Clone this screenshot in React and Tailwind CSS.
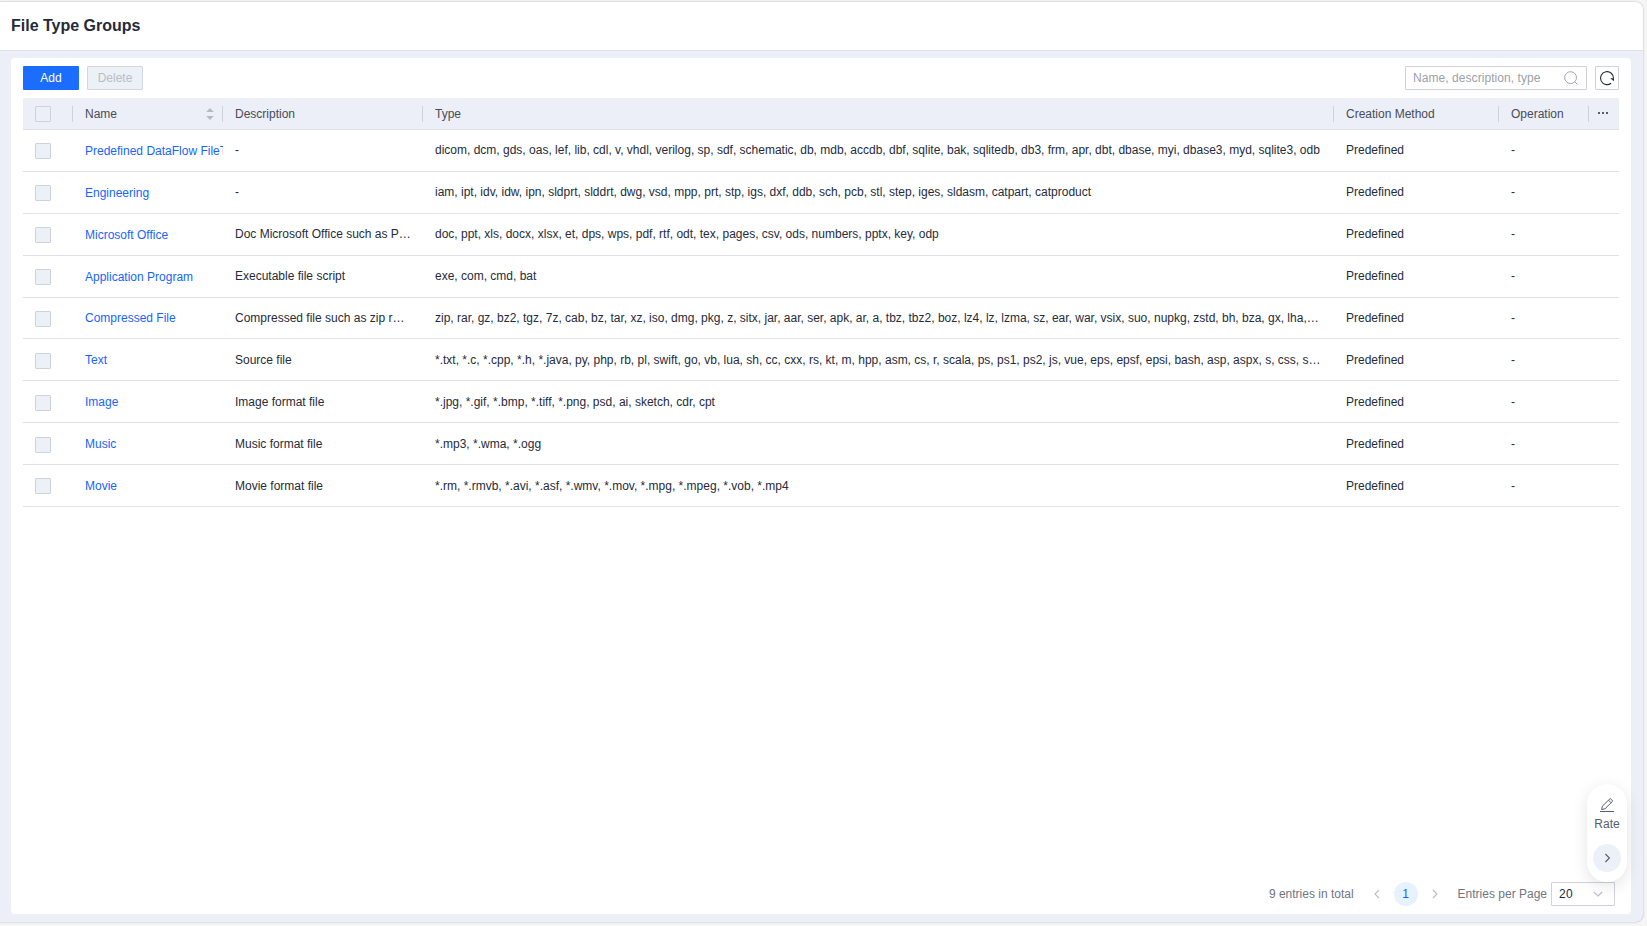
import React from 'react';

const COLS = 'grid grid-cols-[50px_150px_200px_911px_165px_90px_30px]';

const GROUPS = [
  { name: 'Predefined DataFlow FileTypes', desc: '-', types: 'dicom, dcm, gds, oas, lef, lib, cdl, v, vhdl, verilog, sp, sdf, schematic, db, mdb, accdb, dbf, sqlite, bak, sqlitedb, db3, frm, apr, dbt, dbase, myi, dbase3, myd, sqlite3, odb', row: 'h-[42px] leading-[40px]', box: 'mt-[13px]', link: 'pt-px' },
  { name: 'Engineering', desc: '-', types: 'iam, ipt, idv, idw, ipn, sldprt, slddrt, dwg, vsd, mpp, prt, stp, igs, dxf, ddb, sch, pcb, stl, step, iges, sldasm, catpart, catproduct', row: 'h-[42px] leading-[40px]', box: 'mt-[13px]', link: 'pt-px' },
  { name: 'Microsoft Office', desc: 'Doc Microsoft Office such as PPT', types: 'doc, ppt, xls, docx, xlsx, et, dps, wps, pdf, rtf, odt, tex, pages, csv, ods, numbers, pptx, key, odp', row: 'h-[42px] leading-[40px]', box: 'mt-[13px]', link: 'pt-px' },
  { name: 'Application Program', desc: 'Executable file script', types: 'exe, com, cmd, bat', row: 'h-[42px] leading-[40px]', box: 'mt-[13px]', link: 'pt-px' },
  { name: 'Compressed File', desc: 'Compressed file such as zip rar 7z', types: 'zip, rar, gz, bz2, tgz, 7z, cab, bz, tar, xz, iso, dmg, pkg, z, sitx, jar, aar, ser, apk, ar, a, tbz, tbz2, boz, lz4, lz, lzma, sz, ear, war, vsix, suo, nupkg, zstd, bh, bza, gx, lha, lzh', row: 'h-[41px] leading-[40px]', box: 'mt-[13px]', link: '' },
  { name: 'Text', desc: 'Source file', types: '*.txt, *.c, *.cpp, *.h, *.java, py, php, rb, pl, swift, go, vb, lua, sh, cc, cxx, rs, kt, m, hpp, asm, cs, r, scala, ps, ps1, ps2, js, vue, eps, epsf, epsi, bash, asp, aspx, s, css, sass', row: 'h-[42px] leading-[42px]', box: 'mt-[14px]', link: '' },
  { name: 'Image', desc: 'Image format file', types: '*.jpg, *.gif, *.bmp, *.tiff, *.png, psd, ai, sketch, cdr, cpt', row: 'h-[42px] leading-[42px]', box: 'mt-[14px]', link: '' },
  { name: 'Music', desc: 'Music format file', types: '*.mp3, *.wma, *.ogg', row: 'h-[42px] leading-[42px]', box: 'mt-[14px]', link: '' },
  { name: 'Movie', desc: 'Movie format file', types: '*.rm, *.rmvb, *.avi, *.asf, *.wmv, *.mov, *.mpg, *.mpeg, *.vob, *.mp4', row: 'h-[42px] leading-[42px]', box: 'mt-[13px]', link: '' },
];

function HeadCell({ children, className = '' }) {
  return (
    <div className={`flex h-4 items-center border-r border-[#cfd2da] ${className}`}>
      {children}
    </div>
  );
}

function Chevron({ d, className }) {
  return (
    <svg viewBox="0 0 10 10" className={className} fill="none" stroke="currentColor" strokeWidth="1.1">
      <path d={d} />
    </svg>
  );
}

function Toolbar() {
  return (
    <div className="flex h-6 items-center">
      <button className="h-6 w-14 rounded-[1px] bg-[#1a6dff] text-white">Add</button>
      <button className="ml-2 h-6 w-14 rounded-[1px] border border-[#d3d6dd] bg-[#ecf0f7] text-[#babdc6]" disabled>Delete</button>
      <div className="ml-auto flex h-6 w-[182px] items-center justify-between rounded-[1px] border border-[#cfd2dc] pr-[7px] pl-[7px]">
        <span className="tracking-[0.06px] text-[#9b9fa8]">Name, description, type</span>
        <svg viewBox="0 0 16 16" className="size-4" fill="none" stroke="#a0a4ae" strokeWidth="1">
          <circle cx="7.6" cy="7.6" r="5.9" />
          <path d="M12 12l2.3 2.3" />
        </svg>
      </div>
      <button className="ml-2 flex size-6 items-center justify-center rounded-[1px] border border-[#cfd2dc]">
        <svg viewBox="0 0 16 16" className="size-4" fill="none" stroke="#252b3a" strokeWidth="1.1">
          <path d="M12.1 13.2A6.5 6.5 0 1 1 14.5 8.5" />
          <path d="M11.2 8.3h3.8v3z" fill="#252b3a" stroke="none" />
        </svg>
      </button>
    </div>
  );
}

function TableHead() {
  return (
    <div className={`${COLS} h-8 items-center rounded-t-[2px] border-b border-[#dfe1e8] bg-[#eceff7] text-[#464c59]`}>
      <HeadCell className="pl-3">
        <span className="size-4 rounded-[1px] border border-[#cfd2da]" />
      </HeadCell>
      <HeadCell className="justify-between pr-2 pl-3">
        Name
        <svg viewBox="0 0 8 12" className="h-3 w-2" fill="#b6b9c2">
          <path d="M4 0l3.8 4H.2zM4 12l3.8-4H.2z" />
        </svg>
      </HeadCell>
      <HeadCell className="pl-3">Description</HeadCell>
      <HeadCell className="pl-3">Type</HeadCell>
      <HeadCell className="pl-3">Creation Method</HeadCell>
      <HeadCell className="pl-3">Operation</HeadCell>
      <div className="flex gap-[2px] pb-[2px] pl-[9px]">
        <span className="size-[2px] bg-[#575d6c]" />
        <span className="size-[2px] bg-[#575d6c]" />
        <span className="size-[2px] bg-[#575d6c]" />
      </div>
    </div>
  );
}

function GroupRow({ group }) {
  return (
    <div className={`${COLS} ${group.row} border-b border-[#dfe1e8]`}>
      <div className="pl-3">
        <div className={`${group.box} size-4 rounded-[1px] border border-[#cfd2da] bg-[#ecf0f7]`} />
      </div>
      <div className={`overflow-hidden pl-3 whitespace-nowrap text-[#1764ff] ${group.link}`}>{group.name}</div>
      <div className="truncate pr-3 pl-3">{group.desc}</div>
      <div className="truncate pr-3 pl-3">{group.types}</div>
      <div className="pl-3">Predefined</div>
      <div className="pl-3">-</div>
    </div>
  );
}

function Pagination() {
  return (
    <div className="mt-auto flex h-6 items-center pr-1 text-[#71757f]">
      <span className="ml-auto">9 entries in total</span>
      <Chevron d="M7 1L3 5l4 4" className="ml-[18px] size-[10px] text-[#babdc6]" />
      <span className="ml-3 flex size-6 items-center justify-center rounded-full bg-[#e6f3ff] text-[#1a5cff]">1</span>
      <Chevron d="M3 1l4 4-4 4" className="ml-3 size-[10px] text-[#babdc6]" />
      <span className="ml-[18px]">Entries per Page</span>
      <div className="ml-1 flex h-6 w-16 items-center justify-between rounded-[1px] border border-[#cfd2dc] pr-[11px] pl-[7px] text-[#252b3a]">
        <span className="tracking-[0.3px]">20</span>
        <Chevron d="M.8 3L5 7l4.2-4" className="size-[10px] text-[#babdc6]" />
      </div>
    </div>
  );
}

// Floating feedback pill over the lower right corner
function RateWidget() {
  return (
    <div className="absolute top-[784px] left-[1587px] flex h-[98px] w-10 flex-col items-center rounded-[20px] bg-white pt-[13px] text-[#575d6c] shadow-[0_4px_16px_rgba(0,0,0,0.11)]">
      <svg viewBox="0 0 16 16" className="size-4" fill="none" stroke="currentColor" strokeWidth="1">
        <path d="M2.6 12.6l.8-3.5 7.8-7.6 2.6 2.5-7.7 7.7zM9.5 3.2l2.5 2.5" />
        <path d="M1 14.5h14" />
      </svg>
      <span className="mt-[3px] leading-4">Rate</span>
      <span className="mt-3 flex size-7 items-center justify-center rounded-full bg-[#ecf0f7]">
        <Chevron d="M3.4 1l4 4-4 4" className="size-[10px]" />
      </span>
    </div>
  );
}

export default function App() {
  return (
    <div className="relative h-[926px] w-[1647px] overflow-hidden bg-[#f5f5f5] pt-[2px] font-['Liberation_Sans',Arial,sans-serif] text-xs text-[#252b3a]">
      <div className="flex h-[920px] w-[1643px] flex-col overflow-hidden rounded-r-lg bg-[#eceff7] shadow-[0_0_2px_rgba(0,0,0,0.3)]">
        <header className="flex h-[49px] shrink-0 items-center border-b border-[#dfe1e6] bg-white pl-[11px]">
          <h1 className="text-base font-bold">File Type Groups</h1>
        </header>
        <main className="mx-[11px] mt-[7px] mb-2 flex w-[1620px] flex-1 flex-col rounded bg-white px-3 py-2">
          <Toolbar />
          <div className="mt-2">
            <TableHead />
            {GROUPS.map(g => <GroupRow key={g.name} group={g} />)}
          </div>
          <Pagination />
        </main>
      </div>
      <RateWidget />
    </div>
  );
}
